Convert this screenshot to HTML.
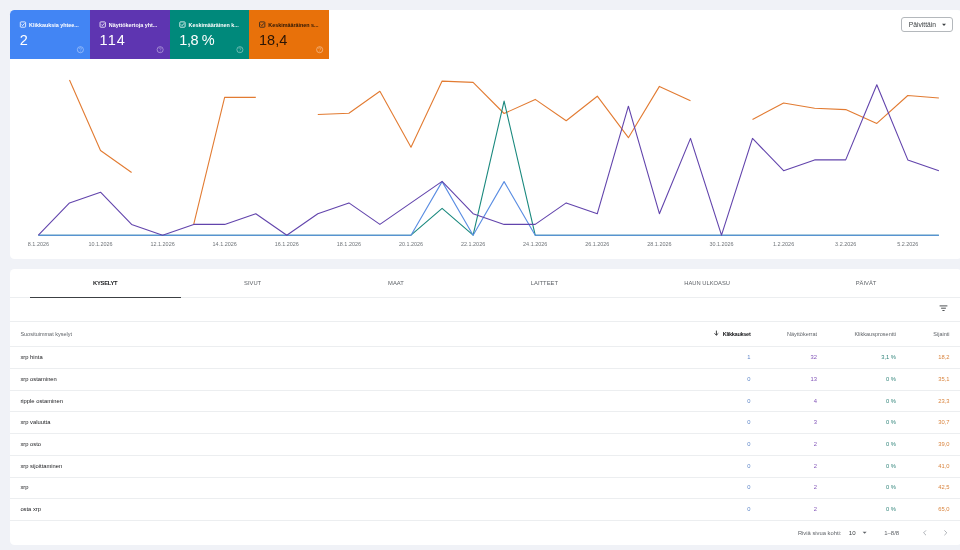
<!DOCTYPE html>
<html><head><meta charset="utf-8">
<style>
html,body{margin:0;padding:0;}
body{width:960px;height:550px;overflow:hidden;will-change:transform;background:#f0f2f7;position:relative;font-family:"Liberation Sans",sans-serif;}
.card{position:absolute;background:#fff;border-radius:4.5px;}
.m{position:absolute;top:10px;height:48.5px;width:79.75px;color:#fff;}
.m .cb{position:absolute;left:10.2px;top:11.6px;width:4.8px;height:4.8px;border:0.6px solid currentColor;border-radius:0.7px;opacity:.85;}
.m .cb svg{position:absolute;left:0;top:0;}
.m .lb{position:absolute;left:19px;top:14.5px;font-size:5.4px;font-weight:bold;line-height:0;white-space:nowrap;}
.m .v{position:absolute;left:9.8px;top:30px;font-size:14.5px;line-height:0;white-space:nowrap;}
.m .h{position:absolute;left:67px;top:36.2px;width:5.2px;height:5.2px;border:0.8px solid currentColor;border-radius:50%;opacity:.75;}
.chart{position:absolute;left:0;top:0;}
.t{position:absolute;line-height:0;white-space:nowrap;}
.q{left:20.4px;font-size:5.8px;color:#202124;}
.n{font-size:5.8px;}
.c1{color:#5f86c8;} .c2{color:#8255b8;} .c3{color:#33867c;} .c4{color:#d9843e;}
.hl{position:absolute;left:10px;right:0;height:0.6px;background:#eceef0;}
.tab{position:absolute;top:283.3px;font-size:5.8px;line-height:0;white-space:nowrap;color:#5f6368;transform:translateX(-50%);}
.hd{position:absolute;top:333.5px;font-size:5.5px;line-height:0;white-space:nowrap;color:#5f6368;}
</style></head><body>
<div class="card" style="left:10px;top:10px;width:952px;height:248.5px;"></div>
<div class="card" style="left:10px;top:269px;width:952px;height:276px;"></div>
<svg class="chart" width="960" height="550" viewBox="0 0 960 550">
<g fill="none" stroke-width="1.1" stroke-linejoin="round">
<path d="M69.5 80.0 L100.5 150.5 L131.6 172.5 M193.7 224.3 L224.7 97.2 L255.8 97.4 M317.8 114.5 L348.9 113.2 L379.9 91.3 L411.0 147.2 L442.1 81.1 L473.1 82.4 L504.1 113.5 L535.2 99.4 L566.2 120.7 L597.3 96.2 L628.4 137.7 L659.4 86.4 L690.5 100.7 M752.5 119.4 L783.6 103.0 L814.6 108.3 L845.7 109.6 L876.8 123.4 L907.8 95.5 L938.9 98.0" stroke="#e27b32"/>
<path d="M38.4 235.2 L69.5 235.2 L100.5 235.2 L131.6 235.2 L162.6 235.2 L193.7 235.2 L224.7 235.2 L255.8 235.2 L286.8 235.2 L317.8 235.2 L348.9 235.2 L379.9 235.2 L411.0 235.2 L442.1 208.4 L473.1 235.2 L504.1 101.1 L535.2 235.2 L566.2 235.2 L597.3 235.2 L628.4 235.2 L659.4 235.2 L690.5 235.2 L721.5 235.2 L752.5 235.2 L783.6 235.2 L814.6 235.2 L845.7 235.2 L876.8 235.2 L907.8 235.2 L938.9 235.2" stroke="#1a897e"/>
<path d="M38.4 235.2 L69.5 235.2 L100.5 235.2 L131.6 235.2 L162.6 235.2 L193.7 235.2 L224.7 235.2 L255.8 235.2 L286.8 235.2 L317.8 235.2 L348.9 235.2 L379.9 235.2 L411.0 235.2 L442.1 181.6 L473.1 235.2 L504.1 181.6 L535.2 235.2 L566.2 235.2 L597.3 235.2 L628.4 235.2 L659.4 235.2 L690.5 235.2 L721.5 235.2 L752.5 235.2 L783.6 235.2 L814.6 235.2 L845.7 235.2 L876.8 235.2 L907.8 235.2 L938.9 235.2" stroke="#5a8de2"/>
<path d="M38.4 235.2 L69.5 202.9 L100.5 192.2 L131.6 224.4 L162.6 235.2 L193.7 224.4 L224.7 224.4 L255.8 213.7 L286.8 235.2 L317.8 213.7 L348.9 202.9 L379.9 224.4 L411.0 202.9 L442.1 181.4 L473.1 213.7 L504.1 224.4 L535.2 224.4 L566.2 202.9 L597.3 213.7 L628.4 106.2 L659.4 213.7 L690.5 138.4 L721.5 235.2 L752.5 138.4 L783.6 170.7 L814.6 159.9 L845.7 159.9 L876.8 84.7 L907.8 159.9 L938.9 170.7" stroke="#6244ac"/>
</g>
<g class="ax" font-family="Liberation Sans" font-size="5.45" fill="#6f7479"><text x="38.4" y="246.3" text-anchor="middle">8.1.2026</text><text x="100.5" y="246.3" text-anchor="middle">10.1.2026</text><text x="162.6" y="246.3" text-anchor="middle">12.1.2026</text><text x="224.7" y="246.3" text-anchor="middle">14.1.2026</text><text x="286.8" y="246.3" text-anchor="middle">16.1.2026</text><text x="348.9" y="246.3" text-anchor="middle">18.1.2026</text><text x="411.0" y="246.3" text-anchor="middle">20.1.2026</text><text x="473.1" y="246.3" text-anchor="middle">22.1.2026</text><text x="535.2" y="246.3" text-anchor="middle">24.1.2026</text><text x="597.3" y="246.3" text-anchor="middle">26.1.2026</text><text x="659.4" y="246.3" text-anchor="middle">28.1.2026</text><text x="721.5" y="246.3" text-anchor="middle">30.1.2026</text><text x="783.6" y="246.3" text-anchor="middle">1.2.2026</text><text x="845.7" y="246.3" text-anchor="middle">3.2.2026</text><text x="907.8" y="246.3" text-anchor="middle">5.2.2026</text></g>
</svg>

<div class="m" style="left:10px;background:#4285f4;border-top-left-radius:4.5px;"><div class="lb">Klikkauksia yhtee...</div><div class="v">2</div></div>
<div class="m" style="left:89.75px;background:#5e35b1;"><div class="lb">Näyttökertoja yht...</div><div class="v" style="letter-spacing:1.1px">114</div></div>
<div class="m" style="left:169.5px;background:#00897b;"><div class="lb">Keskimääräinen k...</div><div class="v" style="letter-spacing:-0.45px">1,8 %</div></div>
<div class="m" style="left:249.25px;background:#e8710a;color:#2a1606;"><div class="lb">Keskimääräinen s...</div><div class="v">18,4</div></div>
<svg style="position:absolute;left:0;top:0" width="960" height="80"><g fill="none" stroke="#fff" stroke-width="0.85" opacity=".95"><rect x="20.30" y="21.9" width="5.3" height="5.3" rx="0.7"/><path d="M21.50 24.5L22.60 25.6L24.60 23.3" stroke-width="0.9"/></g><g fill="none" stroke="#fff" opacity=".5"><circle cx="80.40" cy="49.7" r="3.05" stroke-width="0.8"/><path d="M79.40 48.8a1 1 0 1 1 1.3 0.9c-0.3 0.1-0.3 0.4-0.3 0.7" stroke-width="0.6"/></g><circle cx="80.40" cy="51.3" r="0.35" fill="#fff" opacity=".5"/><g fill="none" stroke="#fff" stroke-width="0.85" opacity=".95"><rect x="100.05" y="21.9" width="5.3" height="5.3" rx="0.7"/><path d="M101.25 24.5L102.35 25.6L104.35 23.3" stroke-width="0.9"/></g><g fill="none" stroke="#fff" opacity=".5"><circle cx="160.15" cy="49.7" r="3.05" stroke-width="0.8"/><path d="M159.15 48.8a1 1 0 1 1 1.3 0.9c-0.3 0.1-0.3 0.4-0.3 0.7" stroke-width="0.6"/></g><circle cx="160.15" cy="51.3" r="0.35" fill="#fff" opacity=".5"/><g fill="none" stroke="#fff" stroke-width="0.85" opacity=".95"><rect x="179.80" y="21.9" width="5.3" height="5.3" rx="0.7"/><path d="M181.00 24.5L182.10 25.6L184.10 23.3" stroke-width="0.9"/></g><g fill="none" stroke="#fff" opacity=".5"><circle cx="239.90" cy="49.7" r="3.05" stroke-width="0.8"/><path d="M238.90 48.8a1 1 0 1 1 1.3 0.9c-0.3 0.1-0.3 0.4-0.3 0.7" stroke-width="0.6"/></g><circle cx="239.90" cy="51.3" r="0.35" fill="#fff" opacity=".5"/><g fill="none" stroke="#202124" stroke-width="0.85" opacity=".95"><rect x="259.55" y="21.9" width="5.3" height="5.3" rx="0.7"/><path d="M260.75 24.5L261.85 25.6L263.85 23.3" stroke-width="0.9"/></g><g fill="none" stroke="#fff" opacity=".5"><circle cx="319.65" cy="49.7" r="3.05" stroke-width="0.8"/><path d="M318.65 48.8a1 1 0 1 1 1.3 0.9c-0.3 0.1-0.3 0.4-0.3 0.7" stroke-width="0.6"/></g><circle cx="319.65" cy="51.3" r="0.35" fill="#fff" opacity=".5"/></svg>
<div style="position:absolute;left:901.3px;top:17.3px;width:50px;height:12.8px;border:0.7px solid #b4b8bc;border-radius:3px;"></div>
<div class="t" style="left:908.8px;top:24.9px;font-size:6.7px;color:#3c4043;">Päivittäin</div>
<svg style="position:absolute;left:0;top:0" width="960" height="550"><path d="M942 23.7 L946 23.7 L944 25.9Z" fill="#3c4043"/></svg>

<div class="tab" style="left:105.2px;color:#202124;font-weight:bold;font-size:5.8px;letter-spacing:-0.25px;">KYSELYT</div>
<div class="tab" style="left:252.6px">SIVUT</div>
<div class="tab" style="left:395.9px">MAAT</div>
<div class="tab" style="left:544.4px">LAITTEET</div>
<div class="tab" style="left:707.1px">HAUN ULKOASU</div>
<div class="tab" style="left:866px">PÄIVÄT</div>
<div class="hl" style="top:297px;"></div>
<div style="position:absolute;left:30px;top:296.6px;width:151px;height:1.2px;background:#3c4043;"></div>
<div class="hl" style="top:320.5px;"></div>
<svg style="position:absolute;left:0;top:0" width="960" height="550"><g stroke="#3c4043" stroke-width="0.9"><path d="M939.6 305.9H947.4M941.1 308.2H945.9M942.4 310.5H944.6"/></g></svg>
<div class="hd" style="left:20.4px;">Suosituimmat kyselyt</div>
<div class="hd" style="right:209.5px;color:#202124;font-weight:bold;font-size:5.6px;letter-spacing:-0.3px;">Klikkaukset</div>
<svg style="position:absolute;left:0;top:0" width="960" height="550"><g stroke="#202124" stroke-width="0.85" fill="none"><path d="M716.4 330.6V335.2M714.5 333.3L716.4 335.2L718.3 333.3"/></g></svg>
<div class="hd" style="right:143px;">Näyttökerrat</div>
<div class="hd" style="right:64px;">Klikkausprosentti</div>
<div class="hd" style="right:10.5px;">Sijainti</div>
<div class="hl" style="top:346.3px;"></div>
<div class="t q" style="top:357.16px">xrp hinta</div><div class="t n c1" style="top:357.16px;right:209.5px">1</div><div class="t n c2" style="top:357.16px;right:143px">32</div><div class="t n c3" style="top:357.16px;right:64px">3,1 %</div><div class="t n c4" style="top:357.16px;right:10.5px">18,2</div><div class="hl" style="top:368.01px"></div><div class="t q" style="top:378.87px">xrp ostaminen</div><div class="t n c1" style="top:378.87px;right:209.5px">0</div><div class="t n c2" style="top:378.87px;right:143px">13</div><div class="t n c3" style="top:378.87px;right:64px">0 %</div><div class="t n c4" style="top:378.87px;right:10.5px">35,1</div><div class="hl" style="top:389.72px"></div><div class="t q" style="top:400.58px">ripple ostaminen</div><div class="t n c1" style="top:400.58px;right:209.5px">0</div><div class="t n c2" style="top:400.58px;right:143px">4</div><div class="t n c3" style="top:400.58px;right:64px">0 %</div><div class="t n c4" style="top:400.58px;right:10.5px">23,3</div><div class="hl" style="top:411.43px"></div><div class="t q" style="top:422.29px">xrp valuutta</div><div class="t n c1" style="top:422.29px;right:209.5px">0</div><div class="t n c2" style="top:422.29px;right:143px">3</div><div class="t n c3" style="top:422.29px;right:64px">0 %</div><div class="t n c4" style="top:422.29px;right:10.5px">30,7</div><div class="hl" style="top:433.14px"></div><div class="t q" style="top:444.00px">xrp osto</div><div class="t n c1" style="top:444.00px;right:209.5px">0</div><div class="t n c2" style="top:444.00px;right:143px">2</div><div class="t n c3" style="top:444.00px;right:64px">0 %</div><div class="t n c4" style="top:444.00px;right:10.5px">39,0</div><div class="hl" style="top:454.85px"></div><div class="t q" style="top:465.71px">xrp sijoittaminen</div><div class="t n c1" style="top:465.71px;right:209.5px">0</div><div class="t n c2" style="top:465.71px;right:143px">2</div><div class="t n c3" style="top:465.71px;right:64px">0 %</div><div class="t n c4" style="top:465.71px;right:10.5px">41,0</div><div class="hl" style="top:476.56px"></div><div class="t q" style="top:487.42px">xrp</div><div class="t n c1" style="top:487.42px;right:209.5px">0</div><div class="t n c2" style="top:487.42px;right:143px">2</div><div class="t n c3" style="top:487.42px;right:64px">0 %</div><div class="t n c4" style="top:487.42px;right:10.5px">42,5</div><div class="hl" style="top:498.27px"></div><div class="t q" style="top:509.12px">osta xrp</div><div class="t n c1" style="top:509.12px;right:209.5px">0</div><div class="t n c2" style="top:509.12px;right:143px">2</div><div class="t n c3" style="top:509.12px;right:64px">0 %</div><div class="t n c4" style="top:509.12px;right:10.5px">65,0</div><div class="hl" style="top:519.98px"></div>
<div class="t" style="left:797.9px;top:532.9px;font-size:5.8px;color:#5f6368;">Riviä sivua kohti:</div>
<div class="t" style="left:848.8px;top:532.9px;font-size:6.1px;color:#3c4043;">10</div>
<svg style="position:absolute;left:0;top:0" width="960" height="550"><path d="M862.6 531.8 L866.6 531.8 L864.6 533.8Z" fill="#5f6368"/><g stroke="#9aa0a6" stroke-width="0.8" fill="none"><path d="M926 530.4L923.6 532.8L926 535.2M944.4 530.4L946.8 532.8L944.4 535.2"/></g></svg>
<div class="t" style="left:884.2px;top:532.9px;font-size:6.0px;color:#5f6368;">1–8/8</div>
</body></html>
